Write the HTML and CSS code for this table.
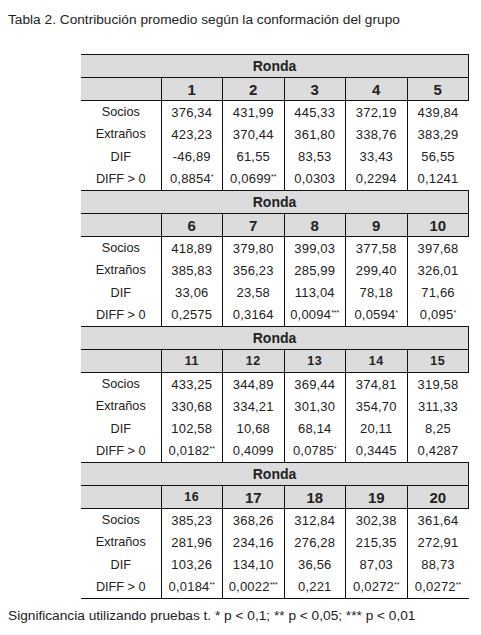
FILE: index.html
```html
<!DOCTYPE html>
<html lang="es">
<head>
<meta charset="utf-8">
<title>Tabla 2</title>
<link rel="stylesheet" href="styles.css">
</head>
<body>
<p class="caption">Tabla 2. Contribución promedio según la conformación del grupo</p>
<table class="data">
<colgroup><col class="c-label"><col><col><col><col><col></colgroup>
<tbody>
<tr class="ronda"><th colspan="6">Ronda</th></tr>
<tr class="nums"><th></th><th>1</th><th>2</th><th>3</th><th>4</th><th>5</th></tr>
<tr><td>Socios</td><td>376,34</td><td>431,99</td><td>445,33</td><td>372,19</td><td>439,84</td></tr>
<tr><td>Extraños</td><td>423,23</td><td>370,44</td><td>361,80</td><td>338,76</td><td>383,29</td></tr>
<tr><td>DIF</td><td>-46,89</td><td>61,55</td><td>83,53</td><td>33,43</td><td>56,55</td></tr>
<tr class="last"><td>DIFF &gt; 0</td><td>0,8854<sup>*</sup></td><td>0,0699<sup>**</sup></td><td>0,0303</td><td>0,2294</td><td>0,1241</td></tr>

<tr class="ronda"><th colspan="6">Ronda</th></tr>
<tr class="nums"><th></th><th>6</th><th>7</th><th>8</th><th>9</th><th>10</th></tr>
<tr><td>Socios</td><td>418,89</td><td>379,80</td><td>399,03</td><td>377,58</td><td>397,68</td></tr>
<tr><td>Extraños</td><td>385,83</td><td>356,23</td><td>285,99</td><td>299,40</td><td>326,01</td></tr>
<tr><td>DIF</td><td>33,06</td><td>23,58</td><td>113,04</td><td>78,18</td><td>71,66</td></tr>
<tr class="last"><td>DIFF &gt; 0</td><td>0,2575</td><td>0,3164</td><td>0,0094<sup>***</sup></td><td>0,0594<sup>*</sup></td><td>0,095<sup>*</sup></td></tr>

<tr class="ronda"><th colspan="6">Ronda</th></tr>
<tr class="nums small"><th></th><th>11</th><th>12</th><th>13</th><th>14</th><th>15</th></tr>
<tr><td>Socios</td><td>433,25</td><td>344,89</td><td>369,44</td><td>374,81</td><td>319,58</td></tr>
<tr><td>Extraños</td><td>330,68</td><td>334,21</td><td>301,30</td><td>354,70</td><td>311,33</td></tr>
<tr><td>DIF</td><td>102,58</td><td>10,68</td><td>68,14</td><td>20,11</td><td>8,25</td></tr>
<tr class="last"><td>DIFF &gt; 0</td><td>0,0182<sup>**</sup></td><td>0,4099</td><td>0,0785<sup>*</sup></td><td>0,3445</td><td>0,4287</td></tr>

<tr class="ronda"><th colspan="6">Ronda</th></tr>
<tr class="nums"><th></th><th class="small">16</th><th>17</th><th>18</th><th>19</th><th>20</th></tr>
<tr><td>Socios</td><td>385,23</td><td>368,26</td><td>312,84</td><td>302,38</td><td>361,64</td></tr>
<tr><td>Extraños</td><td>281,96</td><td>234,16</td><td>276,28</td><td>215,35</td><td>272,91</td></tr>
<tr><td>DIF</td><td>103,26</td><td>134,10</td><td>36,56</td><td>87,03</td><td>88,73</td></tr>
<tr class="last"><td>DIFF &gt; 0</td><td>0,0184<sup>**</sup></td><td>0,0022<sup>***</sup></td><td>0,221</td><td>0,0272<sup>**</sup></td><td>0,0272<sup>**</sup></td></tr>
</tbody>
</table>
<p class="note">Significancia utilizando pruebas t. * p &lt; 0,1; ** p &lt; 0,05; *** p &lt; 0,01</p>
</body>
</html>
```

FILE: styles.css
```css
html, body {
  margin: 0;
  padding: 0;
  background: #fff;
}
body {
  font-family: "Liberation Sans", Arial, sans-serif;
  color: #222;
}
.caption {
  margin: 12px 0 0 8px;
  font-size: 13.7px;
  line-height: 16px;
}
.data {
  margin: 26px 0 0 81px;
  width: 388px;
  border-collapse: collapse;
  table-layout: fixed;
  font-size: 13px;
}
.c-label {
  width: 80px;
}
.data th, .data td {
  padding: 0;
  text-align: center;
  white-space: nowrap;
}
.data td {
  height: 22.25px;
  border-left: 1px solid #111;
  letter-spacing: 0.2px;
}
.data td:first-child {
  border-left: none;
  letter-spacing: 0;
  font-size: 12.7px;
}
.ronda th {
  height: 22px;
  background: #dcdcdc;
  border-top: 1px solid #111;
  border-bottom: 1px solid #111;
  border-right: 1px solid #111;
  font-size: 14px;
  font-weight: bold;
}
.nums th {
  height: 22px;
  background: #dcdcdc;
  border-bottom: 1px solid #111;
  border-left: 1px solid #111;
  border-right: 1px solid #111;
  font-size: 15px;
  font-weight: bold;
}
.nums th:first-child {
  border-left: none;
}
.nums.small th, .nums th.small {
  font-size: 12.5px;
  letter-spacing: 0.5px;
}
.last td {
  border-bottom: 1px solid #111;
}
sup {
  font-size: 7px;
  line-height: 0;
  vertical-align: 4px;
  letter-spacing: 0;
}
.note {
  margin: 9px 0 0 8px;
  font-size: 13.7px;
  line-height: 16px;
}
```
